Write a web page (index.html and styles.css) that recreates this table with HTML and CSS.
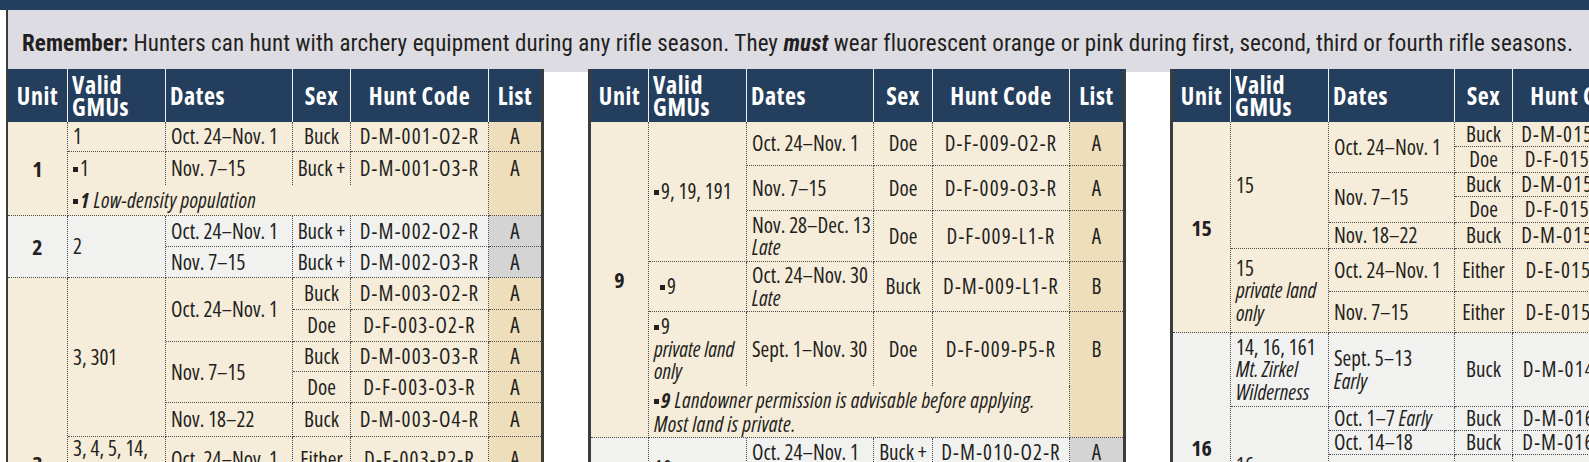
FILE: index.html
```html
<!DOCTYPE html>
<html lang="en">
<head>
<meta charset="utf-8">
<title>Deer rifle hunts</title>
<link rel="stylesheet" href="styles.css">
</head>
<body>
<div class="topbar"></div>
<div class="page">
  <p class="remember"><b>Remember:</b> Hunters can hunt with archery equipment during any rifle season. They <b><i>must</i></b> wear fluorescent orange or pink during first, second, third or fourth rifle seasons.</p>
  <div class="tables">

    <table class="hunts t-left">
      <colgroup><col class="col-unit"><col class="col-gmu"><col class="col-dates"><col class="col-sex"><col class="col-code"><col class="col-list"></colgroup>
      <thead>
        <tr><th>Unit</th><th class="l">Valid<br>GMUs</th><th class="l">Dates</th><th>Sex</th><th>Hunt Code</th><th class="last">List</th></tr>
      </thead>
      <tbody>
        <tr class="h30"><td class="unit" rowspan="3">1</td><td class="gmu">1</td><td>Oct. 24–Nov. 1</td><td class="c">Buck</td><td class="code">D-M-001-O2-R</td><td class="list">A</td></tr>
        <tr class="h33"><td class="gmu nb"><span class="sq"></span>1</td><td class="nb">Nov. 7–15</td><td class="c nb">Buck +</td><td class="code nb">D-M-001-O3-R</td><td class="list nb">A</td></tr>
        <tr class="h31"><td class="note" colspan="4"><span class="sq"></span><b><i>1</i></b> <i>Low-density population</i></td><td class="list"></td></tr>

        <tr class="h31 g"><td class="unit" rowspan="2">2</td><td class="gmu" rowspan="2">2</td><td>Oct. 24–Nov. 1</td><td class="c">Buck +</td><td class="code">D-M-002-O2-R</td><td class="list">A</td></tr>
        <tr class="h31 g"><td>Nov. 7–15</td><td class="c">Buck +</td><td class="code">D-M-002-O3-R</td><td class="list">A</td></tr>

        <tr class="h32"><td class="unit unit-3" rowspan="7">3</td><td class="gmu" rowspan="5">3, 301</td><td rowspan="2">Oct. 24–Nov. 1</td><td class="c">Buck</td><td class="code">D-M-003-O2-R</td><td class="list">A</td></tr>
        <tr class="h32"><td class="c">Doe</td><td class="code">D-F-003-O2-R</td><td class="list">A</td></tr>
        <tr class="h30"><td rowspan="2">Nov. 7–15</td><td class="c">Buck</td><td class="code">D-M-003-O3-R</td><td class="list">A</td></tr>
        <tr class="h31"><td class="c">Doe</td><td class="code">D-F-003-O3-R</td><td class="list">A</td></tr>
        <tr class="h34"><td>Nov. 18–22</td><td class="c">Buck</td><td class="code">D-M-003-O4-R</td><td class="list">A</td></tr>
        <tr class="h45"><td class="gmu" rowspan="2">3, 4, 5, 14,<br>214, 301, 441<br><i>private land<br>only</i></td><td>Oct. 24–Nov. 1</td><td class="c">Either</td><td class="code">D-E-003-P2-R</td><td class="list">A</td></tr>
        <tr class="h45"><td>Nov. 7–15</td><td class="c">Either</td><td class="code">D-E-003-P3-R</td><td class="list">A</td></tr>
      </tbody>
    </table>

    <table class="hunts t-mid">
      <colgroup><col class="col-unit"><col class="col-gmu"><col class="col-dates"><col class="col-sex"><col class="col-code"><col class="col-list"></colgroup>
      <thead>
        <tr><th>Unit</th><th class="l">Valid<br>GMUs</th><th class="l">Dates</th><th>Sex</th><th>Hunt Code</th><th class="last">List</th></tr>
      </thead>
      <tbody>
        <tr class="h44"><td class="unit" rowspan="6">9</td><td class="gmu" rowspan="3"><span class="sq"></span>9, 19, 191</td><td>Oct. 24–Nov. 1</td><td class="c">Doe</td><td class="code">D-F-009-O2-R</td><td class="list">A</td></tr>
        <tr class="h45"><td>Nov. 7–15</td><td class="c">Doe</td><td class="code">D-F-009-O3-R</td><td class="list">A</td></tr>
        <tr class="h51"><td>Nov. 28–Dec. 13<br><i>Late</i></td><td class="c">Doe</td><td class="code">D-F-009-L1-R</td><td class="list">A</td></tr>
        <tr class="h50"><td class="gmu indent"><span class="sq"></span>9</td><td>Oct. 24–Nov. 30<br><i>Late</i></td><td class="c">Buck</td><td class="code">D-M-009-L1-R</td><td class="list">B</td></tr>
        <tr class="h74"><td class="gmu nb"><span class="sq"></span>9<br><i>private land<br>only</i></td><td class="nb">Sept. 1–Nov. 30</td><td class="c nb">Doe</td><td class="code nb">D-F-009-P5-R</td><td class="list nb">B</td></tr>
        <tr class="h52"><td class="note" colspan="4"><span class="sq"></span><b><i>9</i></b> <i>Landowner permission is advisable before applying.<br>Most land is private.</i></td><td class="list"></td></tr>

        <tr class="h30 g"><td class="unit" rowspan="2">10</td><td class="gmu" rowspan="2">10</td><td>Oct. 24–Nov. 1</td><td class="c">Buck +</td><td class="code">D-M-010-O2-R</td><td class="list">A</td></tr>
        <tr class="h31 g"><td>Nov. 7–15</td><td class="c">Buck +</td><td class="code">D-M-010-O3-R</td><td class="list">A</td></tr>
      </tbody>
    </table>

    <table class="hunts t-right">
      <colgroup><col class="col-unit"><col class="col-gmu"><col class="col-dates"><col class="col-sex"><col class="col-code"><col class="col-list"></colgroup>
      <thead>
        <tr><th>Unit</th><th class="l">Valid<br>GMUs</th><th class="l">Dates</th><th>Sex</th><th>Hunt Code</th><th class="last">List</th></tr>
      </thead>
      <tbody>
        <tr class="h25"><td class="unit" rowspan="7">15</td><td class="gmu" rowspan="5">15</td><td rowspan="2">Oct. 24–Nov. 1</td><td class="c">Buck</td><td class="code">D-M-015-O2-R</td><td class="list">A</td></tr>
        <tr class="h26"><td class="c">Doe</td><td class="code">D-F-015-O2-R</td><td class="list">A</td></tr>
        <tr class="h24"><td rowspan="2">Nov. 7–15</td><td class="c">Buck</td><td class="code">D-M-015-O3-R</td><td class="list">A</td></tr>
        <tr class="h26"><td class="c">Doe</td><td class="code">D-F-015-O3-R</td><td class="list">A</td></tr>
        <tr class="h26"><td>Nov. 18–22</td><td class="c">Buck</td><td class="code">D-M-015-O4-R</td><td class="list">A</td></tr>
        <tr class="h43"><td class="gmu" rowspan="2">15<br><i>private land<br>only</i></td><td>Oct. 24–Nov. 1</td><td class="c">Either</td><td class="code">D-E-015-P2-R</td><td class="list">A</td></tr>
        <tr class="h41"><td>Nov. 7–15</td><td class="c">Either</td><td class="code">D-E-015-P3-R</td><td class="list">A</td></tr>

        <tr class="h74 g"><td class="unit unit-16" rowspan="5">16</td><td class="gmu">14, 16, 161<br><i>Mt. Zirkel<br>Wilderness</i></td><td>Sept. 5–13<br><i>Early</i></td><td class="c">Buck</td><td class="code">D-M-014-E1-R</td><td class="list">B</td></tr>
        <tr class="h24 g"><td class="gmu" rowspan="4">16</td><td>Oct. 1–7 <i>Early</i></td><td class="c">Buck</td><td class="code">D-M-016-E1-R</td><td class="list">A</td></tr>
        <tr class="h24 g"><td>Oct. 14–18</td><td class="c">Buck</td><td class="code">D-M-016-K1-R</td><td class="list">A</td></tr>
        <tr class="h40 g"><td>Oct. 24–Nov. 1</td><td class="c">Buck</td><td class="code">D-M-016-O2-R</td><td class="list">A</td></tr>
        <tr class="h30 g"><td>Nov. 7–15</td><td class="c">Buck</td><td class="code">D-M-016-O3-R</td><td class="list">A</td></tr>
      </tbody>
    </table>

  </div>
</div>
</body>
</html>
```

FILE: styles.css
```css
* { box-sizing: border-box; }

html, body {
  margin: 0;
  padding: 0;
  overflow: hidden;
}

body {
  width: 1589px;
  height: 462px;
  background: #ffffff;
  color: #231f20;
  font-family: "Open Sans", "Roboto", sans-serif;
  font-stretch: 75%;
}

.topbar {
  height: 10px;
  background: #243e5d;
}

.page {
  margin-left: 6px;
  border-left: 2px solid #3b3b3b;
  height: 452px;
}

.remember {
  margin: 0;
  height: 62px;
  padding: 21px 0 0 14px;
  background: #dddce3;
  font-family: "Roboto", "Open Sans", sans-serif;
  font-size: 23px;
  font-stretch: 75%;
  letter-spacing: 0.1px;
  line-height: 26px;
  white-space: nowrap;
}

.tables {
  display: flex;
  align-items: flex-start;
  gap: 44px;
  margin-top: -3px;
}

.hunts {
  flex: none;
  border-collapse: separate;
  border-spacing: 0;
  table-layout: fixed;
  font-size: 21px;
  line-height: 22.5px;
}

.t-left { width: 536px; border-right: 3px solid #3c3c3c; }
.t-mid { width: 538px; border-left: 3px solid #3c3c3c; border-right: 3px solid #3c3c3c; }
.t-right { width: 533px; border-left: 3px solid #3c3c3c; }

.t-left .col-unit { width: 60px; }
.t-left .col-gmu { width: 98px; }
.t-left .col-dates { width: 127px; }
.t-left .col-sex { width: 58px; }
.t-left .col-code { width: 138px; }
.t-left .col-list { width: 52px; }

.t-mid .col-unit { width: 58px; }
.t-mid .col-gmu { width: 98px; }
.t-mid .col-dates { width: 127px; }
.t-mid .col-sex { width: 59px; }
.t-mid .col-code { width: 137px; }
.t-mid .col-list { width: 53px; }

.t-right .col-unit { width: 58px; }
.t-right .col-gmu { width: 98px; }
.t-right .col-dates { width: 126px; }
.t-right .col-sex { width: 58px; }
.t-right .col-code { width: 137px; }
.t-right .col-list { width: 53px; }

.hunts th {
  height: 53px;
  padding: 0;
  background: #243e5d;
  color: #ffffff;
  font-size: 24px;
  font-weight: 700;
  letter-spacing: 0.6px;
  line-height: 22px;
  text-align: center;
  vertical-align: middle;
  border-right: 1px solid #f2f2f2;
  white-space: nowrap;
}

.hunts th.l { text-align: left; padding-left: 4px; }
.hunts th.last { border-right: none; }

.hunts td {
  padding: 0 3px 0 5px;
  background: #f6ecda;
  vertical-align: middle;
  white-space: nowrap;
  border-right: 1px dotted #4a4a4a;
  border-bottom: 1px dotted #4a4a4a;
}

.hunts td.c { text-align: center; padding: 0; }
.hunts td.code { text-align: center; padding: 0; letter-spacing: 1.2px; }
.hunts td.list { text-align: center; padding: 0; background: #eedebb; border-right: none; }
.hunts td.nb { border-bottom: none; }
.hunts td.note { line-height: 24px; letter-spacing: 0.3px; }
.hunts td.indent { padding-left: 11px; }

.hunts td.unit {
  padding: 0;
  text-align: center;
  font-size: 22px;
  font-weight: 700;
}

.hunts td.unit-3 { vertical-align: top; padding-top: 174px; }
.hunts td.unit-16 { vertical-align: top; padding-top: 103px; }

.hunts tr.g td { background: #f1f1f0; }
.hunts tr.g td.list { background: #d4d4d5; }

.sq {
  display: inline-block;
  width: 5px;
  height: 5px;
  margin-right: 2px;
  background: #231f20;
  vertical-align: 4px;
}

.h24 { height: 24px; }
.h25 { height: 25px; }
.h26 { height: 26px; }
.h30 { height: 30px; }
.h31 { height: 31px; }
.h32 { height: 32px; }
.h33 { height: 33px; }
.h34 { height: 34px; }
.h40 { height: 40px; }
.h41 { height: 41px; }
.h43 { height: 43px; }
.h44 { height: 44px; }
.h45 { height: 45px; }
.h50 { height: 50px; }
.h51 { height: 51px; }
.h52 { height: 52px; }
.h74 { height: 74px; }
```
